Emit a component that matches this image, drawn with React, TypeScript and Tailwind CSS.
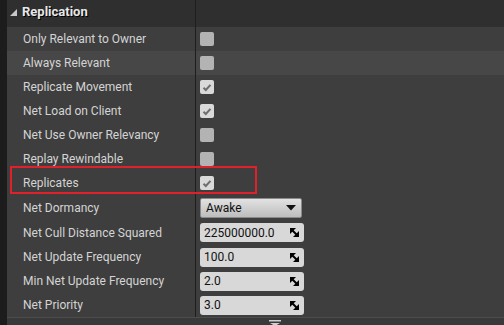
import type { ReactNode } from 'react'

type Row = {
  label: string
  kind: 'check' | 'select' | 'number'
  checked?: boolean
  value?: string
  hover?: boolean
  tall?: boolean
}

const rows: Row[] = [
  { label: 'Only Relevant to Owner', kind: 'check' },
  { label: 'Always Relevant', kind: 'check', hover: true },
  { label: 'Replicate Movement', kind: 'check', checked: true },
  { label: 'Net Load on Client', kind: 'check', checked: true },
  { label: 'Net Use Owner Relevancy', kind: 'check' },
  { label: 'Replay Rewindable', kind: 'check' },
  { label: 'Replicates', kind: 'check', checked: true },
  { label: 'Net Dormancy', kind: 'select', value: 'Awake', tall: true },
  { label: 'Net Cull Distance Squared', kind: 'number', value: '225000000.0', tall: true },
  { label: 'Net Update Frequency', kind: 'number', value: '100.0' },
  { label: 'Min Net Update Frequency', kind: 'number', value: '2.0' },
  { label: 'Net Priority', kind: 'number', value: '3.0' },
]

function Checkbox({ checked }: { checked?: boolean }) {
  return (
    <div
      className={`flex h-[14px] w-[14px] items-center justify-center rounded-[2px] ${
        checked ? 'bg-[#d9d9d9]' : 'bg-[#b3b3b3]'
      }`}
    >
      {checked && (
        <svg width="10" height="9" viewBox="0 0 10 9">
          <path d="M1.5 4.8 L3.8 7 L8.5 1.8" fill="none" stroke="#6e6e6e" strokeWidth="2" />
        </svg>
      )}
    </div>
  )
}

function ResizeIcon() {
  return (
    <svg width="9" height="9" viewBox="0 0 9 9">
      <path d="M0 0 H6 L0 6 Z" fill="#000" />
      <path d="M9 9 H3 L9 3 Z" fill="#000" />
      <path d="M1 1 L8 8" stroke="#000" strokeWidth="2" />
    </svg>
  )
}

function Value({ row }: { row: Row }): ReactNode {
  if (row.kind === 'check') return <Checkbox checked={row.checked} />
  if (row.kind === 'select') {
    return (
      <div className="flex h-[20px] w-[102px] items-center justify-between rounded-[2px] border border-[#8a8a8a] bg-gradient-to-b from-[#e2e2e2] to-[#bdbdbd] pl-[5px] pr-[5px] text-[12px] text-[#111]">
        <span>{row.value}</span>
        <svg width="10" height="6" viewBox="0 0 10 6">
          <path d="M0 0 H10 L5 5.5 Z" fill="#111" />
        </svg>
      </div>
    )
  }
  return (
    <div className="flex h-[19px] w-[104px] items-center justify-between rounded-[3px] bg-[#d8d8d8] pl-[4px] pr-[5px] text-[12px] text-[#111]">
      <span>{row.value}</span>
      <ResizeIcon />
    </div>
  )
}

export default function App() {
  return (
    <div
      className="flex h-[325px] w-[504px] overflow-hidden bg-[#1c1c1c]"
      style={{ fontFamily: 'Roboto, "Liberation Sans", sans-serif' }}
    >
      <div className="ml-[7px] flex flex-1 flex-col bg-[#3e3e3e]">
        <div className="relative flex flex-col">
          {/* header */}
          <div className="flex h-[27px] bg-[#2f2f2f]">
            <div className="flex w-[188px] items-center gap-[5px] pb-[3px] pl-[3px]">
              <svg width="7" height="7" viewBox="0 0 7 7">
                <path d="M7 0 V7 H0 Z" fill="#c8c8c8" />
              </svg>
              <span className="text-[13px] font-bold text-[#e8e8e8] [text-shadow:1px_1px_0_#000]">
                Replication
              </span>
            </div>
            <div className="w-px bg-[#1e1e1e]" />
          </div>

          {rows.map((row) => (
            <div
              key={row.label}
              className={`flex ${row.tall ? 'h-[25px]' : 'h-[24px]'} ${
                row.hover ? 'bg-[#474747]' : 'bg-[#3e3e3e]'
              }`}
            >
              <div className="flex w-[188px] items-center pl-[16px] text-[12px] text-[#d4d4d4]">
                {row.label}
              </div>
              <div className="w-px bg-[#1e1e1e]" />
              <div className="flex items-center pl-[4px]">
                <Value row={row} />
              </div>
            </div>
          ))}

          <div className="pointer-events-none absolute left-[3px] top-[166px] h-[28px] w-[247px] border-2 border-[#e0202a]" />
        </div>

        <div className="h-px" />
        <div className="flex flex-1 justify-center border-t border-[#4c4c4c] bg-[#393939] pt-[2px]">
          <svg width="12" height="6" viewBox="0 0 12 6" className="ml-[38px]">
            <rect x="0" y="0" width="12" height="1.5" fill="#d0d0d0" />
            <path d="M1 3 H11 L6 6 Z" fill="#d0d0d0" />
          </svg>
        </div>
      </div>
    </div>
  )
}
